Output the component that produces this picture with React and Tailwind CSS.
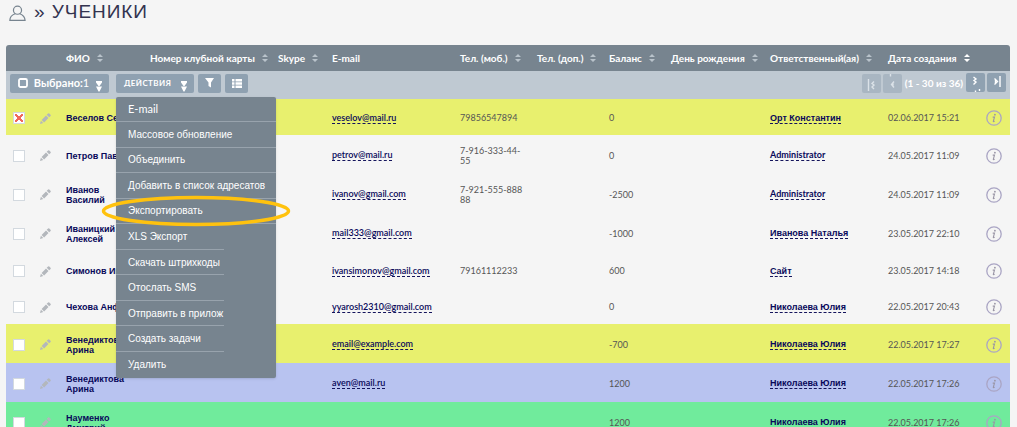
import React from "react";

const columns = [
  { w: 34, label: "" },
  { w: 26, label: "" },
  { w: 84, label: "ФИО", sort: true },
  { w: 128, label: "Номер клубной карты", sort: true },
  { w: 54, label: "Skype", sort: true },
  { w: 128, label: "E-mail" },
  { w: 77, label: "Тел. (моб.)", sort: true },
  { w: 72, label: "Тел. (доп.)", sort: true },
  { w: 62, label: "Баланс", sort: true },
  { w: 99, label: "День рождения", sort: true },
  { w: 118, label: "Ответственный(ая)", sort: true },
  { w: 90, label: "Дата создания", sort: true, active: true },
  { w: 32, label: "" },
];

const yellow = "bg-[#e8f06e]";
const rows = [
  { name: ["Веселов Сергей"], mail: "veselov@mail.ru", tel: ["79856547894"], bal: "0", who: "Орт Константин", date: "02.06.2017 15:21", bg: yellow, checked: true },
  { name: ["Петров Павел"], mail: "petrov@mail.ru", tel: ["7-916-333-44-", "55"], bal: "0", who: "Administrator", date: "24.05.2017 11:09" },
  { name: ["Иванов", "Василий"], mail: "ivanov@gmail.com", tel: ["7-921-555-888", "88"], bal: "-2500", who: "Administrator", date: "24.05.2017 11:09" },
  { name: ["Иваницкий", "Алексей"], mail: "mail333@gmail.com", tel: [], bal: "-1000", who: "Иванова Наталья", date: "23.05.2017 22:10" },
  { name: ["Симонов Иван"], mail: "ivansimonov@gmail.com", tel: ["79161112233"], bal: "600", who: "Сайт", date: "23.05.2017 14:18" },
  { name: ["Чехова Анфиса"], mail: "yyarosh2310@gmail.com", tel: [], bal: "0", who: "Николаева Юлия", date: "22.05.2017 20:43" },
  { name: ["Венедиктова", "Арина"], mail: "email@example.com", tel: [], bal: "-700", who: "Николаева Юлия", date: "22.05.2017 17:27", bg: yellow },
  { name: ["Венедиктова", "Арина"], mail: "aven@mail.ru", tel: [], bal: "1200", who: "Николаева Юлия", date: "22.05.2017 17:26", bg: "bg-[#b8c3f0]" },
  { name: ["Науменко", "Дмитрий"], mail: "", tel: [], bal: "1200", who: "Николаева Юлия", date: "22.05.2017 17:26", bg: "bg-[#70eb9c]" },
];

const actions = [
  "E-mail",
  "Массовое обновление",
  "Объединить",
  "Добавить в список адресатов",
  "Экспортировать",
  "XLS Экспорт",
  "Скачать штрихкоды",
  "Отослать SMS",
  "Отправить в прилож",
  "Создать задачи",
  "Удалить",
];

const lato = "font-['Lato','Liberation_Sans',sans-serif]";
const arial = "font-['Liberation_Sans',sans-serif]";
const isCyrillic = (t) => /[А-Яа-я]/.test(t);

function SortIcon({ active }) {
  return (
    <svg viewBox="0 0 6 8" className={`h-2 w-1.5 shrink-0 ${active ? "fill-white" : "fill-[#b9c3cb]"}`} aria-hidden="true">
      <path d="M3 0 6 3H0zM3 8 0 5h6z" />
    </svg>
  );
}

function DoubleDown() {
  return (
    <svg viewBox="0 0 8 12" className="mt-1.5 h-3 w-2 fill-white" aria-hidden="true">
      <path d="M1 1h6v1.500L4.500 6h-1L1 2.500zM1 6.500h6L4.500 11.500h-1z" />
    </svg>
  );
}

function Pencil() {
  return (
    <svg viewBox="0 0 11 11" className="h-[11px] w-[11px] fill-[#b3b7bc]" aria-hidden="true">
      <path d="M0 11 .9 7.700 3.300 10.100zM1.600 6.900 6 2.500 8.500 5 4.100 9.400zM6.700 1.800 8.100.4Q8.700-.1 9.300.5L10.500 1.700Q11.100 2.300 10.600 2.900L9.200 4.300z" />
    </svg>
  );
}

function InfoIcon() {
  return (
    <svg viewBox="0 0 16 16" className="h-4 w-4" aria-hidden="true">
      <circle cx="8" cy="8" r="7.200" fill="none" stroke="#aaa5c4" strokeWidth="1.300" />
      <circle cx="8.900" cy="4.700" r="0.900" fill="#9995a5" />
      <path d="M6.700 7.100h1.800L7.300 11.400q0 .6 1.300-.2" fill="none" stroke="#9995a5" strokeWidth="1.100" />
    </svg>
  );
}

function RowCheckbox({ label, checked }) {
  return (
    <input
      type="checkbox"
      aria-label={label}
      defaultChecked={checked}
      className="block h-3 w-3 appearance-none border border-[#d3d9df] bg-white checked:bg-[linear-gradient(45deg,transparent_42%,#f0695c_42%,#f0695c_58%,transparent_58%),linear-gradient(-45deg,transparent_42%,#f0695c_42%,#f0695c_58%,transparent_58%)] checked:bg-[length:8px_8px] checked:bg-center checked:bg-no-repeat"
    />
  );
}

function Lines({ items }) {
  return items.map((t) => (
    <span key={t} className="block whitespace-nowrap">
      {t}
    </span>
  ));
}

function DashedLink({ children }) {
  return (
    <a
      href="#"
      className={`inline-block border-b border-dashed border-[#14145c] leading-[10px] whitespace-nowrap text-[#08085a] ${isCyrillic(children) ? arial : lato}`}
    >
      {children}
    </a>
  );
}

function PageButton({ label, disabled, children }) {
  return (
    <button
      type="button"
      aria-label={label}
      disabled={disabled}
      className={`flex h-[19px] w-[19px] items-center justify-center rounded-[2px] ${disabled ? "bg-[#a9b6c2]" : "mb-0.5 bg-[#8fa1b1]"}`}
    >
      <svg viewBox="0 0 19 19" className={`h-full w-full fill-none ${disabled ? "stroke-[#dbe2e8]" : "stroke-white"}`} strokeWidth="1.400" aria-hidden="true">
        {children}
      </svg>
    </button>
  );
}

function ActionsMenu() {
  return (
    <div className="absolute top-full left-0 z-10 mt-1 w-[160px] rounded-[2px] bg-[#77848f] shadow-sm">
      <ul className="grid h-[281px] auto-rows-fr text-white">
        {actions.map((a, i) => (
          <li
            key={a}
            className={`${i < 5 ? "w-full" : "w-[108px]"} ${i < actions.length - 1 ? "border-b border-[#98a3ad]" : ""}`}
          >
            <a
              href="#"
              className={`flex h-full items-center pl-3 whitespace-nowrap ${isCyrillic(a) ? `${arial} text-[10px]` : `${lato} text-[11px]`}`}
            >
              {a}
            </a>
          </li>
        ))}
      </ul>
      <svg viewBox="0 0 190 32" className="pointer-events-none absolute top-[98px] -left-[15px] h-8 w-[190px]" aria-hidden="true">
        <ellipse cx="95" cy="16" rx="92.500" ry="13.500" fill="none" stroke="#ffc20e" strokeWidth="3.500" />
      </svg>
    </div>
  );
}

function Toolbar() {
  const btn = "flex h-[19px] items-center rounded-[2px] bg-[#8fa1b1] text-white";
  return (
    <div className="flex h-full items-center pr-1 pb-1 pl-1">
      <button type="button" className={`${btn} w-[99px] justify-between pr-1.5 pl-2`}>
        <svg viewBox="0 0 10 10" className="h-2.5 w-2.5" aria-hidden="true">
          <rect x="1" y="1" width="8" height="8" rx="1.500" fill="none" stroke="#fff" strokeWidth="1.800" />
        </svg>
        <span className={`${lato} text-[11px] whitespace-nowrap`}>
          <b>Выбрано:</b>1
        </span>
        <DoubleDown />
      </button>
      <div className="relative ml-[7px]">
        <button type="button" className={`${btn} w-[78px] justify-between pr-1.5 pl-2`}>
          <span className={`${lato} text-[8px] font-bold tracking-wider`}>ДЕЙСТВИЯ</span>
          <DoubleDown />
        </button>
        <ActionsMenu />
      </div>
      <button type="button" aria-label="Фильтр" className={`${btn} ml-1 w-[23px] justify-center`}>
        <svg viewBox="0 0 9 10" className="h-2.5 w-[9px] fill-white" aria-hidden="true">
          <path d="M0 0h9L6 4.500V9.500L3.500 8V4.500z" />
        </svg>
      </button>
      <button type="button" aria-label="Столбцы" className={`${btn} ml-1 w-[23px] justify-center`}>
        <svg viewBox="0 0 10 9" className="h-[9px] w-2.5 fill-white" aria-hidden="true">
          <path d="M0 0h2.500v2.400H0zM3.500 0H10v2.400H3.500zM0 3.300h2.500v2.400H0zM3.500 3.300H10v2.400H3.500zM0 6.600h2.500V9H0zM3.500 6.600H10V9H3.500z" />
        </svg>
      </button>
      <div className="ml-auto flex items-center gap-0.5">
        <PageButton label="В начало" disabled>
          <path d="M6.500 5v12M12 7.500l-2 2 2 1.500-2 2 2 2" />
        </PageButton>
        <PageButton label="Назад" disabled>
          <path d="M7.500 0v2.500M11 7.500l-2.500 3 2.500 3M10 9.500v2" />
        </PageButton>
        <span className="px-px text-[10px] font-bold whitespace-nowrap text-white">(1 - 30 из 36)</span>
        <PageButton label="Вперёд">
          <path d="M7.500 4 10 6 8 7.500l2 1.500-2.500 2.500M13.500 16v2M9.500 17.500v1.500" />
        </PageButton>
        <PageButton label="В конец">
          <path d="M13 3v11M7.500 5.500l3 3-3 3M8.500 7v3" />
        </PageButton>
      </div>
    </div>
  );
}

export default function App() {
  return (
    <main className={`h-screen overflow-hidden bg-[#f5f5f5] pr-[7px] pl-1.5 ${lato}`}>
      <header className="flex h-[45px] items-start">
        <svg viewBox="0 0 18 18" className="mt-[5px] ml-[3px] h-[17px] w-[17px]" fill="none" stroke="#77848f" strokeWidth="1.300" aria-hidden="true">
          <circle cx="9" cy="5.500" r="4.300" />
          <path d="M6.500 9.300C3 10.500 1 13 .9 16.300H17C16.800 13 14.500 10.500 11.500 9.300" />
        </svg>
        <h1 className="ml-2 font-['Liberation_Sans',sans-serif] text-[19px] leading-6 tracking-wider text-[#33334f]">» УЧЕНИКИ</h1>
      </header>
      <table className="w-full table-fixed border-collapse text-left">
        <colgroup>
          {columns.map((c, i) => (
            <col key={i} style={{ width: `${(c.w / 1004) * 100}%` }} />
          ))}
        </colgroup>
        <thead>
          <tr className="h-[26px] text-[10px] text-white">
            {columns.map((c, i) => (
              <th key={i} className="bg-[#77848f] p-0 font-bold first:rounded-tl-[3px] last:rounded-tr-[3px]">
                <span className="flex items-center gap-[7px] whitespace-nowrap">
                  {c.label}
                  {c.sort && <SortIcon active={c.active} />}
                </span>
              </th>
            ))}
          </tr>
          <tr className="h-7 bg-[#bfc9d2]">
            <td colSpan={columns.length} className="h-7 p-0">
              <Toolbar />
            </td>
          </tr>
        </thead>
        <tbody className="text-[9px] leading-[10px] text-[#555]">
          {rows.map((r, i) => (
            <tr key={i} className={`${r.name.length > 1 || r.tel.length > 1 ? "h-[39px]" : "h-9"} ${r.bg || ""}`}>
              <td className="p-0 pt-0.5 pl-[7px]">
                <RowCheckbox label={r.name.join(" ")} checked={r.checked} />
              </td>
              <td className="p-0 pt-0.5">
                <Pencil />
              </td>
              <td className={`p-0 pt-0.5 font-bold text-[#08085a] ${arial}`}>
                <Lines items={r.name} />
              </td>
              <td className="p-0" />
              <td className="p-0" />
              <td className="p-0 pt-0.5 font-semibold">{r.mail && <DashedLink>{r.mail}</DashedLink>}</td>
              <td className="p-0 pt-0.5">
                <Lines items={r.tel} />
              </td>
              <td className="p-0" />
              <td className="p-0 pt-0.5">{r.bal}</td>
              <td className="p-0" />
              <td className="p-0 pt-0.5 font-bold">
                <DashedLink>{r.who}</DashedLink>
              </td>
              <td className="p-0 pt-0.5 whitespace-nowrap">{r.date}</td>
              <td className="p-0 pt-0.5 pl-2">
                <InfoIcon />
              </td>
            </tr>
          ))}
        </tbody>
      </table>
    </main>
  );
}
